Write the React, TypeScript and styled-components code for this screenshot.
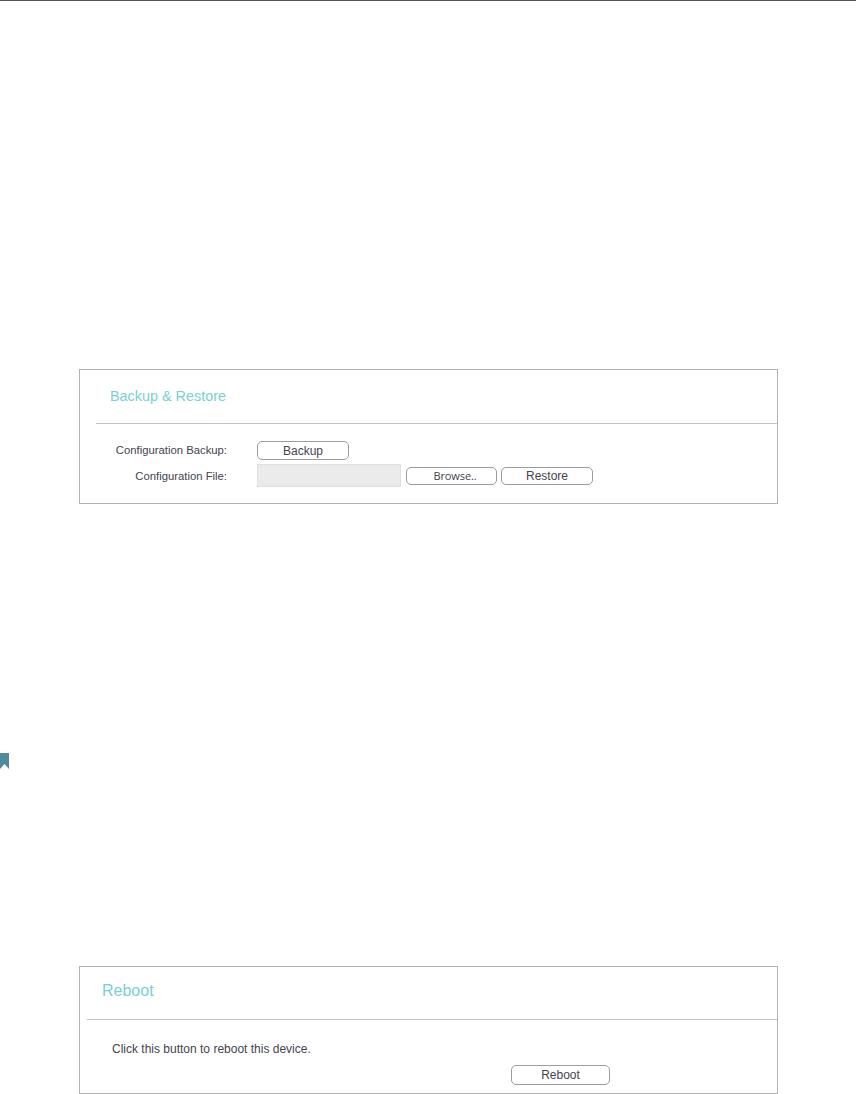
import React from "react";
import styled, { createGlobalStyle } from "styled-components";

const Global = createGlobalStyle`
  html, body { margin: 0; padding: 0; background: #fff; }
  body { font-family: "Liberation Sans", Arial, sans-serif; color: #45434f; }
`;

const Page = styled.div`
  width: 856px;
  height: 1094px;
  overflow: hidden;
  box-sizing: border-box;
  border-top: 1px solid #50545a;
  display: flex;
  flex-direction: column;
  align-items: flex-start;
`;

const Panel = styled.section<{ $top: number; $height: number }>`
  margin: ${(p) => p.$top}px 0 0 79px;
  width: 699px;
  height: ${(p) => p.$height}px;
  box-sizing: border-box;
  border: 1px solid #b2b2b2;
  flex-shrink: 0;
`;

const PanelHeader = styled.div<{ $inset: number; $pad: number; $height: number; $lift: number }>`
  margin-left: ${(p) => p.$inset}px;
  padding-left: ${(p) => p.$pad}px;
  padding-bottom: ${(p) => p.$lift}px;
  height: ${(p) => p.$height}px;
  box-sizing: border-box;
  border-bottom: 1px solid #c4c4c4;
  display: flex;
  align-items: center;
`;

const Title = styled.h2<{ $size: number }>`
  margin: 0;
  font-size: ${(p) => p.$size}px;
  font-weight: 400;
  color: #79d0d2;
`;

const Form = styled.div`
  padding: 17px 0 0 0;
  display: grid;
  grid-template-columns: 147px auto;
  column-gap: 30px;
  row-gap: 4px;
  align-items: center;
  justify-content: start;
`;

const Label = styled.label<{ $lift?: number }>`
  font-size: 11.3px;
  text-align: right;
  color: #45434f;
  padding-bottom: ${(p) => p.$lift ?? 0}px;
`;

const Controls = styled.div`
  display: flex;
  align-items: center;
`;

const Button = styled.button<{ $width: number; $height: number; $gapLeft?: number; $drop?: number }>`
  width: ${(p) => p.$width}px;
  height: ${(p) => p.$height}px;
  margin-left: ${(p) => p.$gapLeft ?? 0}px;
  margin-top: ${(p) => p.$drop ?? 0}px;
  padding: 0;
  background: #fff;
  border: 1px solid #9c9c9c;
  border-radius: 5px;
  font-family: "Liberation Sans", sans-serif;
  font-size: 12px;
  color: #45434f;
  text-align: center;
`;

const BrowseButton = styled(Button)`
  padding: 0 0 2px 7px;
  font-family: "Open Sans", sans-serif;
  font-size: 11px;
  letter-spacing: -0.1px;
`;

const FileField = styled.div`
  width: 144px;
  height: 23px;
  box-sizing: border-box;
  background: #ebebeb;
  border: 1px solid #e0e0e4;
`;

const Bookmark = styled.svg`
  display: block;
  margin-top: 249px;
  flex-shrink: 0;
`;

const Message = styled.p`
  margin: 0;
  padding: 22px 0 0 32px;
  font-size: 12px;
  line-height: 14px;
  color: #45434f;
`;

const Actions = styled.div`
  padding: 9px 0 0 431px;
  display: flex;
`;

export default function App() {
  return (
    <>
      <Global />
      <Page>
        <Panel $top={368} $height={135}>
          <PanelHeader $inset={16} $pad={14} $height={54} $lift={2}>
            <Title $size={14.4}>Backup &amp; Restore</Title>
          </PanelHeader>
          <Form>
            <Label $lift={2}>Configuration Backup:</Label>
            <Controls>
              <Button $width={92} $height={19}>Backup</Button>
            </Controls>
            <Label>Configuration File:</Label>
            <Controls>
              <FileField />
              <BrowseButton $width={91} $height={18} $gapLeft={5} $drop={1}>Browse..</BrowseButton>
              <Button $width={92} $height={18} $gapLeft={4} $drop={1}>Restore</Button>
            </Controls>
          </Form>
        </Panel>
        <Bookmark width="9" height="16" viewBox="0 0 9 16" aria-hidden="true">
          <path d="M0 0H9V16L4.5 11L0 16Z" fill="#4f8a9b" />
        </Bookmark>
        <Panel $top={197} $height={128}>
          <PanelHeader $inset={7} $pad={15} $height={53} $lift={4}>
            <Title $size={16}>Reboot</Title>
          </PanelHeader>
          <Message>Click this button to reboot this device.</Message>
          <Actions>
            <Button $width={99} $height={20}>Reboot</Button>
          </Actions>
        </Panel>
      </Page>
    </>
  );
}
